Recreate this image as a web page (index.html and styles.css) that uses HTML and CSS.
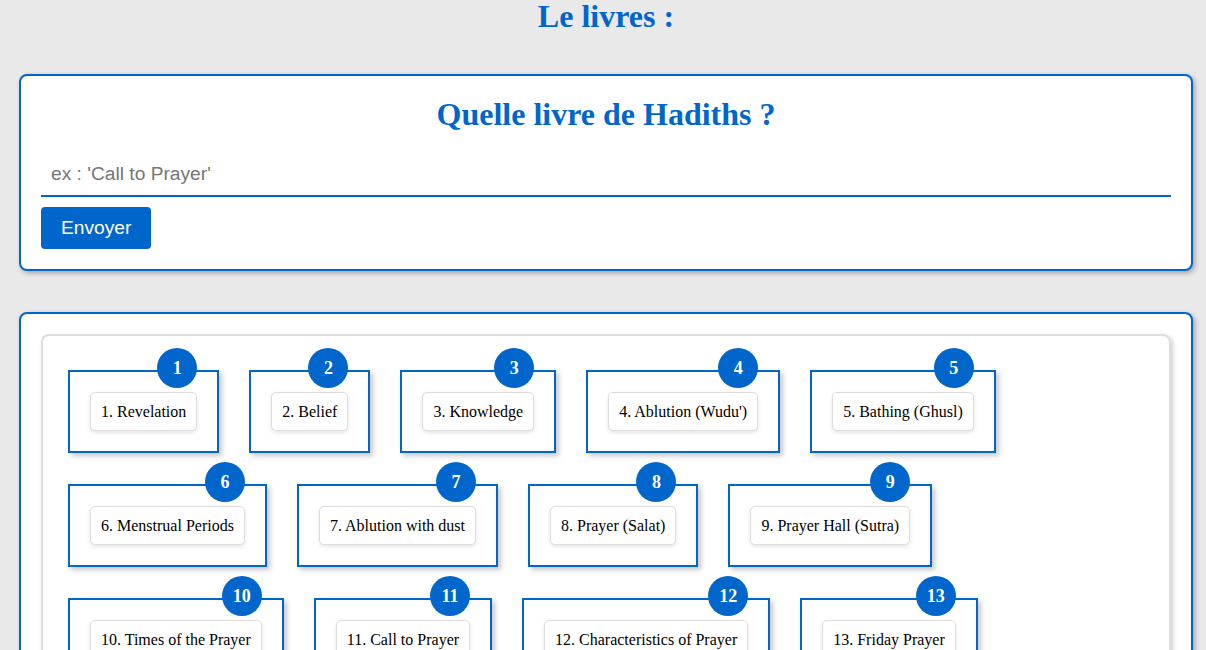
FILE: index.html
```html
<!DOCTYPE html>
<html lang="fr">
<head>
<meta charset="utf-8">
<title>Le livres</title>
<link rel="stylesheet" href="styles.css">
</head>
<body>
<div class="page">
  <h1 class="title">Le livres :</h1>

  <section class="card search-card">
    <h2 class="search-title">Quelle livre de Hadiths ?</h2>
    <input class="search-input" type="text" placeholder="ex : 'Call to Prayer'">
    <button class="send-btn" type="button">Envoyer</button>
  </section>

  <section class="card list-card">
    <div class="list-box">
      <div class="book"><span class="badge">1</span><span class="chip">1. Revelation</span></div>
      <div class="book"><span class="badge">2</span><span class="chip">2. Belief</span></div>
      <div class="book"><span class="badge">3</span><span class="chip">3. Knowledge</span></div>
      <div class="book"><span class="badge">4</span><span class="chip">4. Ablution (Wudu')</span></div>
      <div class="book"><span class="badge">5</span><span class="chip">5. Bathing (Ghusl)</span></div>
      <div class="book"><span class="badge">6</span><span class="chip">6. Menstrual Periods</span></div>
      <div class="book"><span class="badge">7</span><span class="chip">7. Ablution with dust</span></div>
      <div class="book"><span class="badge">8</span><span class="chip">8. Prayer (Salat)</span></div>
      <div class="book"><span class="badge">9</span><span class="chip">9. Prayer Hall (Sutra)</span></div>
      <div class="book"><span class="badge">10</span><span class="chip">10. Times of the Prayer</span></div>
      <div class="book"><span class="badge">11</span><span class="chip">11. Call to Prayer</span></div>
      <div class="book"><span class="badge">12</span><span class="chip">12. Characteristics of Prayer</span></div>
      <div class="book"><span class="badge">13</span><span class="chip">13. Friday Prayer</span></div>
      <div class="book"><span class="badge">14</span><span class="chip">14. Fear Prayer</span></div>
      <div class="book"><span class="badge">15</span><span class="chip">15. The Two Festivals (Eids)</span></div>
      <div class="book"><span class="badge">16</span><span class="chip">16. Witr Prayer</span></div>
    </div>
  </section>
</div>
</body>
</html>
```

FILE: styles.css
```css
* {
  box-sizing: border-box;
}

html, body {
  margin: 0;
  padding: 0;
  background: #e9e9e9;
}

body {
  font-family: "Liberation Serif", "Times New Roman", serif;
  color: #000;
}

.page {
  padding: 0 13px 40px 19px;
}

.title {
  margin: 0;
  font-size: 32px;
  line-height: 32px;
  font-weight: bold;
  color: #0066cc;
  text-align: center;
}

.card {
  background: #fff;
  border: 2px solid #0066cc;
  border-radius: 8px;
  box-shadow: 2px 2px 5px rgba(0, 0, 0, 0.3);
  padding: 20px;
}

.search-card {
  margin-top: 42px;
  display: flex;
  flex-direction: column;
  align-items: flex-start;
}

.search-title {
  margin: 0 0 20px;
  width: 100%;
  font-size: 32px;
  font-weight: bold;
  color: #0066cc;
  text-align: center;
}

.search-input {
  width: 100%;
  border: none;
  border-bottom: 2px solid #0066cc;
  padding: 10px;
  font-family: "Liberation Sans", Arial, sans-serif;
  font-size: 19.2px;
  outline: none;
  background: transparent;
}

.search-input::placeholder {
  color: #767676;
}

.send-btn {
  margin-top: 10px;
  background: #0066cc;
  color: #fff;
  border: none;
  border-radius: 4px;
  padding: 10px 20px;
  font-family: "Liberation Sans", Arial, sans-serif;
  font-size: 19.2px;
  line-height: 22px;
}

.list-card {
  margin-top: 41px;
}

.list-box {
  border: 2px solid #dedede;
  border-radius: 8px;
  box-shadow: 2px 2px 4px rgba(0, 0, 0, 0.18);
  padding: 34px 25px 25px;
  display: flex;
  flex-wrap: wrap;
  column-gap: 30px;
  row-gap: 31px;
}

.book {
  position: relative;
  border: 2px solid #0066cc;
  padding: 20px;
  background: #fff;
  box-shadow: 3px 3px 5px rgba(0, 0, 0, 0.22);
}

.badge {
  position: absolute;
  top: -24px;
  right: 20px;
  width: 40px;
  height: 40px;
  border-radius: 50%;
  background: #0066cc;
  color: #fff;
  font-weight: bold;
  font-size: 18px;
  display: flex;
  align-items: center;
  justify-content: center;
}

.chip {
  display: block;
  white-space: nowrap;
  border: 1px solid #dddddd;
  border-radius: 5px;
  padding: 10px;
  font-size: 16px;
  line-height: 17px;
  background: #fff;
  box-shadow: 0 2px 4px rgba(0, 0, 0, 0.1);
}
```
